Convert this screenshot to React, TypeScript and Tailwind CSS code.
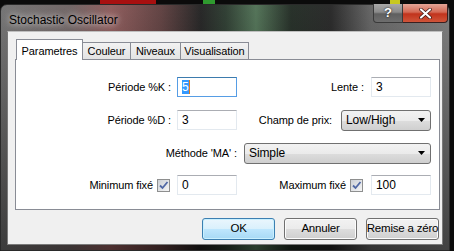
import React from 'react';

const font = "font-['Liberation_Sans',Arial,sans-serif]";

function TextBox({ value, focused, w = 'w-[60px]' }: { value: string; focused?: boolean; w?: string }) {
  return (
    <div
      className={`${w} h-[20px] flex items-center pl-[4px] bg-white border text-[12px] text-black ${
        focused ? 'border-[#569de5] border-t-[#3d7bad]' : 'border-[#e3e9ef] border-t-[#abadb3]'
      }`}
    >
      {focused ? (
        <span className="flex items-center">
          <span className="bg-[#3399ff] text-white leading-[14px]">{value}</span>
          <span className="w-[1px] h-[14px] bg-[#e07a1a]" />
        </span>
      ) : (
        <span>{value}</span>
      )}
    </div>
  );
}

function Combo({ value, w }: { value: string; w: string }) {
  return (
    <div className={`${w} h-[21px] flex items-center justify-between pl-[4px] pr-[5px] rounded-[3px] border border-[#707070] bg-[linear-gradient(180deg,#f2f2f2_0%,#ebebeb_50%,#dddddd_51%,#cfcfcf_100%)] text-[12px] text-black`}>
      <span>{value}</span>
      <svg width="7" height="4" viewBox="0 0 7 4">
        <path d="M0 0h7L3.5 4z" fill="#000" />
      </svg>
    </div>
  );
}

function Check() {
  return (
    <div className="w-[13px] h-[13px] border border-[#8e8f8f] bg-[linear-gradient(135deg,#cbcfd5,#f6f6f6)] p-[1px]">
      <svg width="11" height="11" viewBox="0 0 11 11" className="block -mt-[1px] -ml-[1px]">
        <path d="M2 5.5l2.5 2.5L9.5 2" stroke="#5068a5" strokeWidth="1.8" fill="none" />
      </svg>
    </div>
  );
}

function Button({ label, def }: { label: string; def?: boolean }) {
  return (
    <div
      className={`w-[73px] h-[22px] flex items-center justify-center whitespace-nowrap rounded-[3px] border text-[12px] text-black ${
        def
          ? 'border-[#3c7fb1] bg-[linear-gradient(180deg,#eaf6fd_0%,#d9f0fc_50%,#bee6fd_51%,#a7d9f5_100%)] shadow-[inset_0_0_0_1px_#c9f0ff]'
          : 'border-[#707070] bg-[linear-gradient(180deg,#f2f2f2_0%,#ebebeb_50%,#dddddd_51%,#cfcfcf_100%)] shadow-[inset_0_0_0_1px_#fcfcfc]'
      }`}
    >
      <span className="text-[11.5px] tracking-[-0.2px]">{label}</span>
    </div>
  );
}

export default function App() {
  return (
    <div className={`w-[454px] h-[251px] overflow-hidden bg-[linear-gradient(90deg,#0b0b0b_0,#0b0b0b_100px,#a81010_100px,#a81010_156px,#0b0b0b_156px,#0b0b0b_203px,#2f9a2f_203px,#2f9a2f_215px,#0b0b0b_215px,#0b0b0b_390px,#c8c820_390px,#c8c820_400px,#0b0b0b_400px)] pt-[4px] ${font}`}>
      <div className="w-[450px] h-[247px] flex flex-col rounded-t-[7px] border border-[#2a2a2a] bg-[linear-gradient(180deg,rgba(255,255,255,0.06),rgba(0,0,0,0.45)),linear-gradient(90deg,#6e6e6e_0,#6a5e5e_70px,#8a5555_110px,#5a3a3a_160px,#1c1c1c_200px,#26362a_225px,#4b6d50_255px,#1c261e_290px,#202020_330px,#5e5e5e_370px,#7a7a7a_454px)]">
        <div className="h-[26px] flex items-start justify-between pl-[8px] pr-[1px]">
          <span className="pt-[6px] text-[12px] text-black [text-shadow:0_0_6px_rgba(255,255,255,0.75),0_0_10px_rgba(255,255,255,0.5)]">
            Stochastic Oscillator
          </span>
          <div className="flex -mt-px">
            <div className="w-[30px] h-[19px] flex items-center justify-center rounded-bl-[4px] border border-[#3a3a3a] border-t-0 bg-[linear-gradient(180deg,#a8a8a8_0%,#8a8a8a_45%,#5f5f5f_55%,#6e6e6e_100%)] text-white font-bold text-[13px] [text-shadow:0_0_2px_#000]">
              ?
            </div>
            <div className="w-[45px] h-[19px] flex items-center justify-center rounded-br-[4px] border border-[#3a2020] border-t-0 border-l-0 bg-[linear-gradient(180deg,#e4a597_0%,#d46a55_45%,#c1331c_55%,#d0553a_100%)]">
              <svg width="13" height="11" viewBox="0 0 13 11">
                <path d="M2 1.5l9 8M11 1.5l-9 8" stroke="#3a1410" strokeWidth="3.6" strokeLinecap="round" />
                <path d="M2 1.5l9 8M11 1.5l-9 8" stroke="#fff" strokeWidth="2.2" strokeLinecap="round" />
              </svg>
            </div>
          </div>
        </div>

        <div className="mx-[6px] h-[214px] flex flex-col border border-[#7a7a7a] border-t-[#bfbfbf] bg-[#f0f0f0] pt-[8px] pl-[7px] pr-[2px]">
          <div className="flex items-end h-[20px] pl-[1px] relative z-10 -mb-px text-[11px] tracking-[-0.1px] text-black">
            <div className="w-[67px] h-[21px] flex justify-center pt-[3px] bg-white border border-b-0 border-[#898c95]">Parametres</div>
            <div className="w-[48px] h-[18px] flex justify-center items-center border border-[#898c95] border-l-0 bg-[linear-gradient(180deg,#f2f2f2,#e3e3e3)]">Couleur</div>
            <div className="w-[50px] h-[18px] flex justify-center items-center border border-[#898c95] border-l-0 bg-[linear-gradient(180deg,#f2f2f2,#e3e3e3)]">Niveaux</div>
            <div className="w-[68px] h-[18px] flex justify-center items-center border border-[#898c95] border-l-0 bg-[linear-gradient(180deg,#f2f2f2,#e3e3e3)]">Visualisation</div>
          </div>

          <div className="h-[151px] flex flex-col gap-[13px] pt-[17px] pr-[8px] border border-[#898c95] bg-white text-[11px] tracking-[-0.1px] text-black">
            <div className="flex items-center h-[20px]">
              <span className="w-[155px] text-right">Période %K :</span>
              <div className="ml-[6px]"><TextBox value="5" focused /></div>
              <div className="flex-1 flex items-center justify-end gap-[7px]">
                <span>Lente :</span>
                <TextBox value="3" />
              </div>
            </div>
            <div className="flex items-center h-[20px]">
              <span className="w-[155px] text-right">Période %D :</span>
              <div className="ml-[6px]"><TextBox value="3" /></div>
              <div className="flex-1 flex items-center justify-end gap-[9px]">
                <span>Champ de prix:</span>
                <Combo value="Low/High" w="w-[90px]" />
              </div>
            </div>
            <div className="flex items-center h-[20px]">
              <span className="w-[221px] text-right">Méthode 'MA' :</span>
              <div className="ml-[7px] flex-1"><Combo value="Simple" w="w-full" /></div>
            </div>
            <div className="flex items-center h-[20px] -mt-px">
              <div className="w-[155px] flex items-center justify-end gap-[4px] pr-[1px]">
                <span>Minimum fixé</span>
                <Check />
              </div>
              <div className="ml-[6px]"><TextBox value="0" /></div>
              <div className="flex-1 flex items-center justify-end">
                <span className="mr-[4px]">Maximum fixé</span>
                <Check />
                <div className="ml-[8px]"><TextBox value="100" /></div>
              </div>
            </div>
          </div>

          <div className="flex justify-end gap-[9px] mt-[8px] pr-[1px]">
            <Button label="OK" def />
            <Button label="Annuler" />
            <Button label="Remise a zéro" />
          </div>
        </div>
      </div>
    </div>
  );
}
